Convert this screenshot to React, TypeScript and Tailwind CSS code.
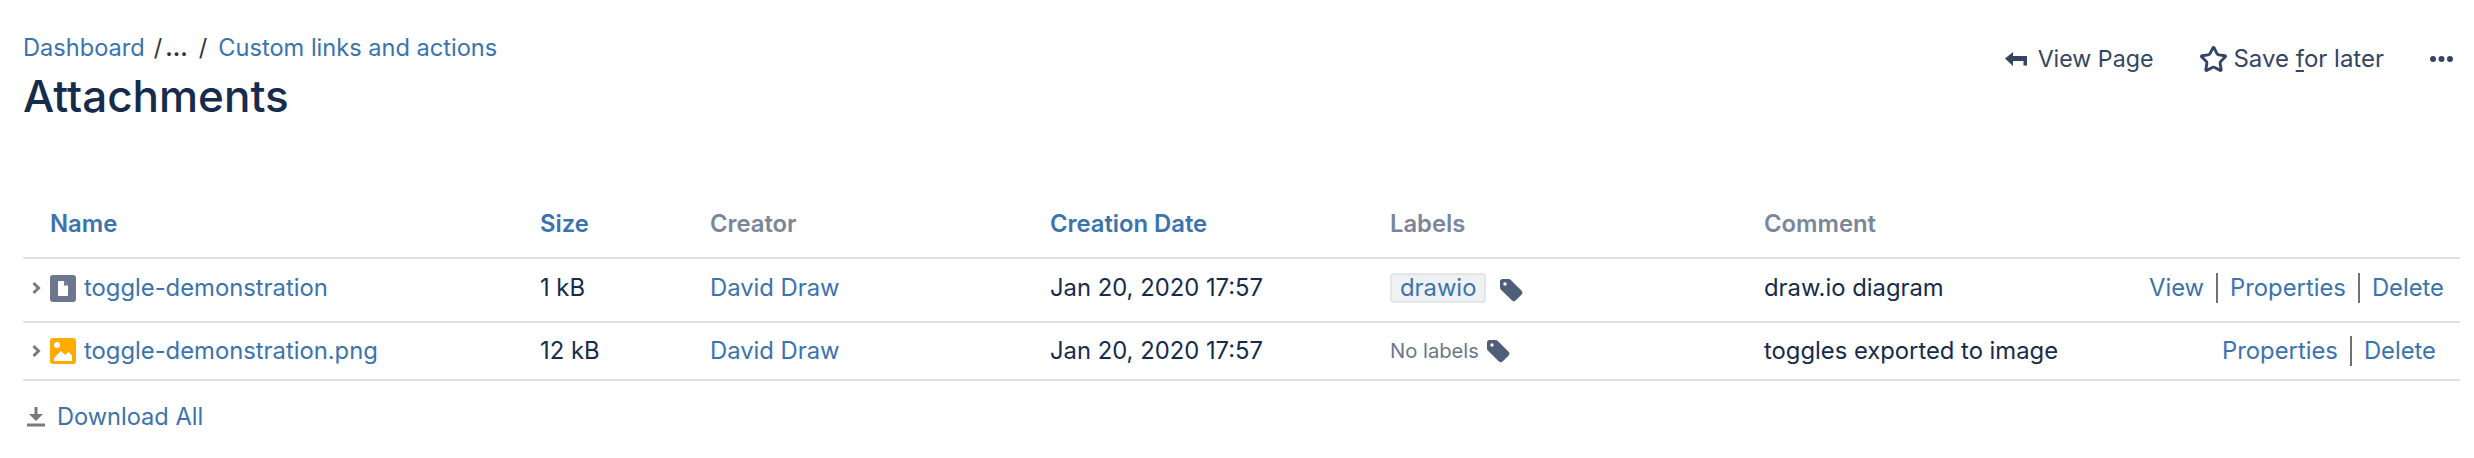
import { Star } from "lucide-react";

const link = "text-[#3b73af]";

function BackIcon() {
  return (
    <svg width="22" height="14" viewBox="0 0 22 14" className="text-[#344563]">
      <path d="M0 6.500 8 0v4h14v9.500h-3.500V9H8v5z" fill="currentColor" />
    </svg>
  );
}

function MoreIcon() {
  return (
    <svg width="23" height="6" viewBox="0 0 23 6" className="text-[#344563]">
      <circle cx="3" cy="3" r="3" fill="currentColor" />
      <circle cx="11.500" cy="3" r="3" fill="currentColor" />
      <circle cx="20" cy="3" r="3" fill="currentColor" />
    </svg>
  );
}

function Chevron() {
  return (
    <svg width="10" height="14" viewBox="0 0 10 14" className="shrink-0">
      <path d="M1.500 2 6.500 7 1.500 12" fill="none" stroke="#7a7a7a" strokeWidth="3" />
    </svg>
  );
}

function FileIcon() {
  return (
    <svg width="26" height="27" viewBox="0 0 26 27" className="shrink-0">
      <rect width="26" height="27" rx="3" fill="#6b778c" />
      <path d="M8 7a1 1 0 0 1 1-1h5l4 4.500V20a1 1 0 0 1-1 1H9a1 1 0 0 1-1-1z" fill="#fff" />
      <path d="M14 6v4.500h4z" fill="#6b778c" />
    </svg>
  );
}

function ImageIcon() {
  return (
    <svg width="26" height="26" viewBox="0 0 26 26" className="shrink-0">
      <rect width="26" height="26" rx="3" fill="#ffab00" />
      <circle cx="7" cy="7" r="3" fill="#fff" />
      <path d="M4 23v-3l7-7 4 4 3.500-3 3.500 3.500V23z" fill="#fff" />
    </svg>
  );
}

function TagIcon() {
  return (
    <svg width="23" height="23" viewBox="0 0 23 23" className="shrink-0">
      <path
        d="M2.500 0h6.200a3 3 0 0 1 2.100.9l10.600 10.700a3 3 0 0 1 0 4.200l-5.500 5.500a3 3 0 0 1-4.200 0L1 10.700A3 3 0 0 1 0 8.500V2.500A2.500 2.500 0 0 1 2.500 0z"
        fill="#505f79"
      />
      <circle cx="5" cy="5" r="1.700" fill="#fff" />
    </svg>
  );
}

function DownloadIcon() {
  return (
    <svg width="18" height="21" viewBox="0 0 18 21" className="shrink-0">
      <path d="M7.500 1h3v7H16l-7 7-7-7h5.500z" fill="#7a7a7a" />
      <rect y="17.500" width="18" height="3" fill="#7a7a7a" />
    </svg>
  );
}

function Actions({ items }: { items: string[] }) {
  return (
    <div className="flex items-center justify-end">
      {items.map((item, i) => (
        <span key={item} className="flex items-center">
          {i > 0 && <span className="mx-[12px] h-[30px] w-[2px] bg-[#707070]" />}
          <span className={link}>{item}</span>
        </span>
      ))}
    </div>
  );
}

const gridCols = "grid grid-cols-[517px_170px_340px_340px_374px_1fr]";

export default function App() {
  return (
    <div className="h-[458px] w-[2474px] overflow-hidden bg-white pl-[23px] pr-[14px] text-[23.8px] text-[#172b4d] [font-family:Inter,sans-serif]">
      <div className="flex justify-between">
        <div className="pt-[32px]">
          <div className="flex h-[32px] items-center text-[23.6px] leading-none">
            <span className={link}>Dashboard</span>
            <span className="ml-[9px] text-[#333]">/</span>
            <span className="ml-[3px] font-semibold text-[#333]">...</span>
            <span className="ml-[11px] text-[#333]">/</span>
            <span className={`ml-[11px] ${link}`}>Custom links and actions</span>
          </div>
          <h1 className="mt-[7px] text-[44px] font-medium leading-[50px] text-[#172b4d]">Attachments</h1>
        </div>
        <div className="flex items-center gap-[46px] self-start pr-[7px] pt-[41px] text-[23.2px] text-[#344563]">
          <span className="flex items-center gap-[11px]">
            <BackIcon />
            View Page
          </span>
          <span className="flex items-center gap-[5px]">
            <Star size={29} strokeWidth={2.4} />
            <span className="text-[24px]">
              Save <span className="underline underline-offset-3">f</span>or later
            </span>
          </span>
          <MoreIcon />
        </div>
      </div>

      <div className={`${gridCols} mt-[73px] h-[65px] items-center border-b-2 border-[#dfe1e6] pb-[3px] font-semibold text-[#7a869a]`}>
        <span className={`pl-[27px] ${link}`}>Name</span>
        <span className={link}>Size</span>
        <span>Creator</span>
        <span className={link}>Creation Date</span>
        <span>Labels</span>
        <span>Comment</span>
      </div>

      <div className={`${gridCols} h-[64px] items-center border-b-2 border-[#dfe1e6] pb-[4px] pr-[16px]`}>
        <div className="flex items-center">
          <span className="ml-[9px] mr-[8px]"><Chevron /></span>
          <FileIcon />
          <span className={`ml-[8px] ${link}`}>toggle-demonstration</span>
        </div>
        <span>1 kB</span>
        <span className={link}>David Draw</span>
        <span>Jan 20, 2020 17:57</span>
        <div className="flex items-center">
          <span className={`rounded-[4px] border-2 border-[#e4e5e9] bg-[#f0f1f3] px-[8px] leading-[26px] ${link}`}>drawio</span>
          <span className="ml-[14px] mt-[4px]"><TagIcon /></span>
        </div>
        <div className="flex items-center justify-between">
          <span>draw.io diagram</span>
          <Actions items={["View", "Properties", "Delete"]} />
        </div>
      </div>

      <div className={`${gridCols} h-[58px] items-center border-b-2 border-[#dfe1e6] pr-[24px]`}>
        <div className="flex items-center">
          <span className="ml-[9px] mr-[8px]"><Chevron /></span>
          <ImageIcon />
          <span className={`ml-[8px] ${link}`}>toggle-demonstration.png</span>
        </div>
        <span>12 kB</span>
        <span className={link}>David Draw</span>
        <span>Jan 20, 2020 17:57</span>
        <div className="flex items-center">
          <span className="text-[20.2px] text-[#6b778c]">No labels</span>
          <span className="ml-[8px] mt-[2px]"><TagIcon /></span>
        </div>
        <div className="flex items-center justify-between">
          <span>toggles exported to image</span>
          <Actions items={["Properties", "Delete"]} />
        </div>
      </div>

      <div className="mt-[18px] flex items-center gap-[12px] pl-[4px] text-[23.6px]">
        <DownloadIcon />
        <span className={link}>Download All</span>
      </div>
    </div>
  );
}
